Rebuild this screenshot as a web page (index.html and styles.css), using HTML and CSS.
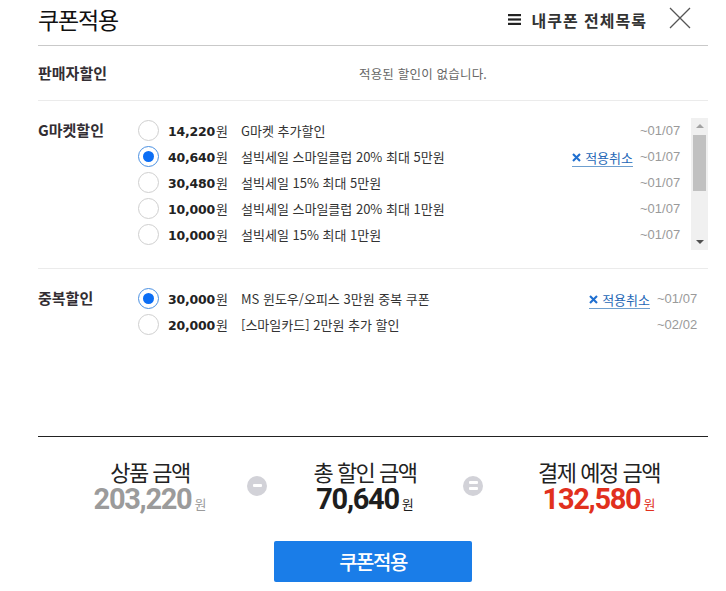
FILE: index.html
```html
<!DOCTYPE html>
<html lang="ko">
<head>
<meta charset="utf-8">
<title>쿠폰적용</title>
<link rel="stylesheet" href="styles.css">
</head>
<body>
<div class="layer">
  <header class="head">
    <h1 class="title">쿠폰적용</h1>
    <a class="mylist">
      <svg class="burger" width="13" height="11" viewBox="0 0 13 11"><rect x="0" y="0" width="13" height="2.2" fill="#222"/><rect x="0" y="4.4" width="13" height="2.2" fill="#222"/><rect x="0" y="8.8" width="13" height="2.2" fill="#222"/></svg>
      <span>내쿠폰 전체목록</span>
    </a>
    <button class="close" aria-label="닫기">
      <svg width="22" height="22" viewBox="0 0 22 22"><path d="M1 1 L21 21 M21 1 L1 21" stroke="#555" stroke-width="1.3" fill="none"/></svg>
    </button>
  </header>

  <section class="sec seller">
    <h2 class="label">판매자할인</h2>
    <p class="empty">적용된 할인이 없습니다.</p>
  </section>

  <section class="sec gmk">
    <h2 class="label">G마켓할인</h2>
    <div class="listwrap">
      <ul class="list">
        <li class="row"><span class="radio"></span><b class="amt">14,220<i>원</i></b><span class="desc">G마켓 추가할인</span><span class="date">~01/07</span></li>
        <li class="row"><span class="radio on"></span><b class="amt">40,640<i>원</i></b><span class="desc">설빅세일 스마일클럽 20% 최대 5만원</span><a class="cancel"><svg class="xi" width="9" height="9" viewBox="0 0 9 9"><path d="M1 1 L8 8 M8 1 L1 8" stroke="#1f6fd0" stroke-width="2.1" fill="none"/></svg>적용취소</a><span class="date">~01/07</span></li>
        <li class="row"><span class="radio"></span><b class="amt">30,480<i>원</i></b><span class="desc">설빅세일 15% 최대 5만원</span><span class="date">~01/07</span></li>
        <li class="row"><span class="radio"></span><b class="amt">10,000<i>원</i></b><span class="desc">설빅세일 스마일클럽 20% 최대 1만원</span><span class="date">~01/07</span></li>
        <li class="row"><span class="radio"></span><b class="amt">10,000<i>원</i></b><span class="desc">설빅세일 15% 최대 1만원</span><span class="date">~01/07</span></li>
      </ul>
      <div class="sbar">
        <span class="arr up"></span>
        <span class="thumb"></span>
        <span class="arr down"></span>
      </div>
    </div>
  </section>

  <section class="sec dup">
    <h2 class="label">중복할인</h2>
    <ul class="list">
      <li class="row"><span class="radio on"></span><b class="amt">30,000<i>원</i></b><span class="desc">MS 윈도우/오피스 3만원 중복 쿠폰</span><a class="cancel"><svg class="xi" width="9" height="9" viewBox="0 0 9 9"><path d="M1 1 L8 8 M8 1 L1 8" stroke="#1f6fd0" stroke-width="2.1" fill="none"/></svg>적용취소</a><span class="date">~01/07</span></li>
      <li class="row"><span class="radio"></span><b class="amt">20,000<i>원</i></b><span class="desc">[스마일카드] 2만원 추가 할인</span><span class="date">~02/02</span></li>
    </ul>
  </section>

  <section class="sum">
    <div class="col c1">
      <p class="slabel">상품 금액</p>
      <p class="sval gray">203,220<small>원</small></p>
    </div>
    <span class="op minus"><i></i></span>
    <div class="col c2">
      <p class="slabel">총 할인 금액</p>
      <p class="sval">70,640<small>원</small></p>
    </div>
    <span class="op eq"><i></i><i></i></span>
    <div class="col c3">
      <p class="slabel">결제 예정 금액</p>
      <p class="sval red">132,580<small>원</small></p>
    </div>
  </section>

  <div class="btnrow"><button class="apply">쿠폰적용</button></div>
</div>
</body>
</html>
```

FILE: styles.css
```css
* { box-sizing: border-box; margin: 0; padding: 0; }
body {
  background: #fff;
  font-family: "Noto Sans CJK KR", "Noto Sans", sans-serif;
  color: #333;
  width: 726px;
}
ul { list-style: none; }
.layer { margin: 0 18px 0 38px; width: 670px; }

.head {
  height: 46px;
  border-bottom: 1px solid #c9c9c9;
  display: flex;
  align-items: center;
}
.title {
  font-size: 23px;
  font-weight: 400;
  letter-spacing: -1.2px;
  color: #111;
  line-height: 1;
  padding-bottom: 7px;
  flex: 1;
}
.mylist {
  display: flex;
  align-items: center;
  gap: 10px;
  font-size: 16px;
  font-weight: 700;
  color: #333;
  letter-spacing: 1px;
  padding-bottom: 6px;
}
.burger { display: block; }
.close {
  border: 0;
  background: none;
  margin-left: 22px;
  margin-right: 17px;
  padding: 0;
  display: flex;
  align-self: flex-start;
  margin-top: 7px;
}

.sec { display: flex; border-bottom: 1px solid #ebebeb; }
.label {
  width: 100px;
  flex: none;
  font-size: 15px;
  font-weight: 700;
  color: #332e33;
  line-height: 26px;
  letter-spacing: 0;
}
.seller { height: 55px; align-items: center; }
.empty {
  flex: 1;
  text-align: center;
  font-size: 12.5px;
  color: #666;
  letter-spacing: 0.2px;
}

.gmk { padding: 16px 0 17px; }
.listwrap { flex: 1; display: flex; height: 134px; }
.list { flex: 1; }
.row {
  height: 26px;
  display: flex;
  align-items: center;
  padding-right: 11px;
}
.radio {
  width: 21px; height: 21px;
  border: 1px solid #cfcfcf;
  border-radius: 50%;
  flex: none;
  margin-right: 9px;
  display: flex; align-items: center; justify-content: center;
  background: #fff;
}
.radio.on { border-color: #4a90e2; }
.radio.on::after {
  content: "";
  width: 11px; height: 11px;
  border-radius: 50%;
  background: #0b6ef5;
}
.amt {
  font-family: "DejaVu Sans", Verdana, sans-serif;
  font-size: 12.5px;
  font-weight: 700;
  color: #222;
  width: 73px;
  flex: none;
  letter-spacing: -0.2px;
}
.amt i {
  font-style: normal;
  font-weight: 400;
  font-family: "Noto Sans CJK KR", sans-serif;
  font-size: 13px;
  color: #333;
  margin-left: 1px;
}
.desc {
  flex: 1;
  font-size: 13px;
  color: #333;
  letter-spacing: 0;
  white-space: nowrap;
}
.cancel {
  font-size: 13px;
  color: #2467b6;
  border-bottom: 1px solid #6e9fcf;
  line-height: 16px;
  margin-top: 4px;
  margin-right: 7px;
  letter-spacing: 0;
  display: flex;
  align-items: center;
}
.xi { display: block; margin-right: 4px; }
.date {
  font-family: "Liberation Sans", Arial, sans-serif;
  font-size: 13px;
  color: #9a9a9a;
  width: 40px;
  text-align: right;
}

.sbar {
  width: 17px;
  flex: none;
  background: #f0f0f0;
  margin-top: 1px;
  margin-bottom: 1px;
  display: flex;
  flex-direction: column;
  align-items: center;
}
.arr { width: 0; height: 0; border-left: 4px solid transparent; border-right: 4px solid transparent; }
.arr.up { border-bottom: 4px solid #a3a3a3; margin-top: 6px; }
.arr.down { border-top: 4px solid #505050; margin-top: auto; margin-bottom: 6px; }
.thumb { width: 13px; height: 56px; background: #c1c1c1; margin-top: 7px; }

.dup { padding-top: 16px; height: 168px; border-bottom: 1px solid #222; }

.sum { display: flex; align-items: center; padding-top: 21px; }
.col { text-align: center; flex: none; }
.c1 { width: 180px; margin-left: 22px; }
.c2 { width: 178px; margin-left: 9px; }
.c3 { width: 190px; margin-left: 21px; }
.op {
  width: 20px; height: 20px; border-radius: 50%;
  background: #d2d2d8;
  display: flex; flex-direction: column; align-items: center; justify-content: center; gap: 3px;
  margin-top: -6px; flex: none;
}
.op.minus { margin-left: 7px; }
.op.eq { margin-left: 9px; }
.op i { width: 9px; height: 3px; background: #fff; border-radius: 1px; display: block; }
.slabel {
  font-size: 22px;
  line-height: 26px;
  color: #222;
  letter-spacing: -1.5px;
}
.sval {
  font-family: Roboto, "Noto Sans", sans-serif;
  font-size: 29px;
  font-weight: 700;
  line-height: 30px;
  color: #1e1e1e;
  letter-spacing: -1.3px;
}
.sval small {
  font-family: "Noto Sans CJK KR", sans-serif;
  font-size: 13px;
  font-weight: 400;
  margin-left: 3px;
  letter-spacing: 0;
}
.sval.gray { color: #9b9b9b; }
.sval.red { color: #e1301d; }

.btnrow { display: flex; padding-top: 22px; }
.apply {
  margin-left: 236px;
  width: 198px;
  height: 41px;
  border: 0;
  border-radius: 2px;
  background: #1a7de8;
  color: #fff;
  font-family: "Noto Sans CJK KR", sans-serif;
  font-size: 20px;
  font-weight: 500;
  letter-spacing: -1.5px;
}
```
